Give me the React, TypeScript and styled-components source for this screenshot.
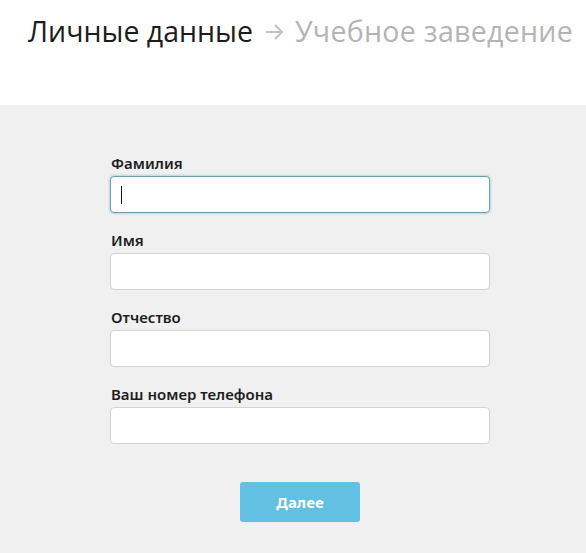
import React from "react";
import styled, { createGlobalStyle } from "styled-components";

const Global = createGlobalStyle`
  html, body { margin: 0; padding: 0; background: #f0f0f1; }
  body { font-family: "Open Sans", "Noto Sans", sans-serif; }
  * { box-sizing: border-box; }
`;

const Page = styled.div`
  width: 586px;
  min-height: 553px;
  display: flex;
  flex-direction: column;
`;

const Header = styled.header`
  background: #ffffff;
  height: 105px;
  padding: 10px 0 0 28px;
  display: flex;
  align-items: flex-start;
`;

const Title = styled.h1`
  margin: 0;
  font-family: "Open Sans", sans-serif;
  font-weight: 400;
  font-size: 28.5px;
  line-height: 42px;
  color: #1c1c1c;
  white-space: nowrap;
  display: flex;
  align-items: center;
`;

const Step = styled.span<{ $muted?: boolean }>`
  color: ${(p) => (p.$muted ? "#b4b4b4" : "#1c1c1c")};
  letter-spacing: ${(p) => (p.$muted ? "0.3px" : "0")};
`;

const Arrow = styled.span`
  margin: 2px 11px 0 12px;
  display: inline-flex;
`;

const Main = styled.main`
  flex: 1;
  background: #f0f0f1;
  display: flex;
  flex-direction: column;
  align-items: center;
  padding: 48px 0 0 14px;
`;

const Form = styled.form`
  width: 380px;
  display: flex;
  flex-direction: column;
`;

const Field = styled.div`
  display: flex;
  flex-direction: column;
  margin-bottom: 17px;
`;

const Label = styled.label`
  font-family: "Noto Sans", sans-serif;
  font-weight: 600;
  font-size: 15px;
  line-height: 20px;
  color: #1e1e1e;
  margin: 0 0 3px 1px;
`;

const Input = styled.div<{ $focused?: boolean }>`
  height: 37px;
  background: #ffffff;
  border: 1px solid ${(p) => (p.$focused ? "#6f9fb0" : "#d3d3d3")};
  border-radius: 4px;
  box-shadow: ${(p) => (p.$focused ? "0 0 2px 1px rgba(120,180,205,0.45)" : "none")};
  display: flex;
  align-items: center;
  padding-left: 10px;
`;

const Caret = styled.span`
  width: 1px;
  height: 18px;
  background: #111;
`;

const Actions = styled.div`
  display: flex;
  justify-content: center;
  margin-top: 21px;
`;

const Button = styled.button`
  width: 120px;
  height: 40px;
  border: none;
  border-radius: 3px;
  background: #62c0e2;
  color: #ffffff;
  font-family: "Noto Sans", sans-serif;
  font-weight: 700;
  font-size: 15px;
  padding: 0;
`;

const fields = [
  { label: "Фамилия", focused: true },
  { label: "Имя" },
  { label: "Отчество" },
  { label: "Ваш номер телефона" },
];

export default function App() {
  return (
    <Page>
      <Global />
      <Header>
        <Title>
          <Step>Личные данные</Step>
          <Arrow>
            <svg width="19" height="16" viewBox="0 0 19 16" fill="none" stroke="#c0c0c0" strokeWidth="1.8">
              <path d="M1 8h16M10 1l7 7-7 7" />
            </svg>
          </Arrow>
          <Step $muted>Учебное заведение</Step>
        </Title>
      </Header>
      <Main>
        <Form>
          {fields.map((f) => (
            <Field key={f.label}>
              <Label>{f.label}</Label>
              <Input $focused={f.focused}>{f.focused && <Caret />}</Input>
            </Field>
          ))}
          <Actions>
            <Button type="button">Далее</Button>
          </Actions>
        </Form>
      </Main>
    </Page>
  );
}
